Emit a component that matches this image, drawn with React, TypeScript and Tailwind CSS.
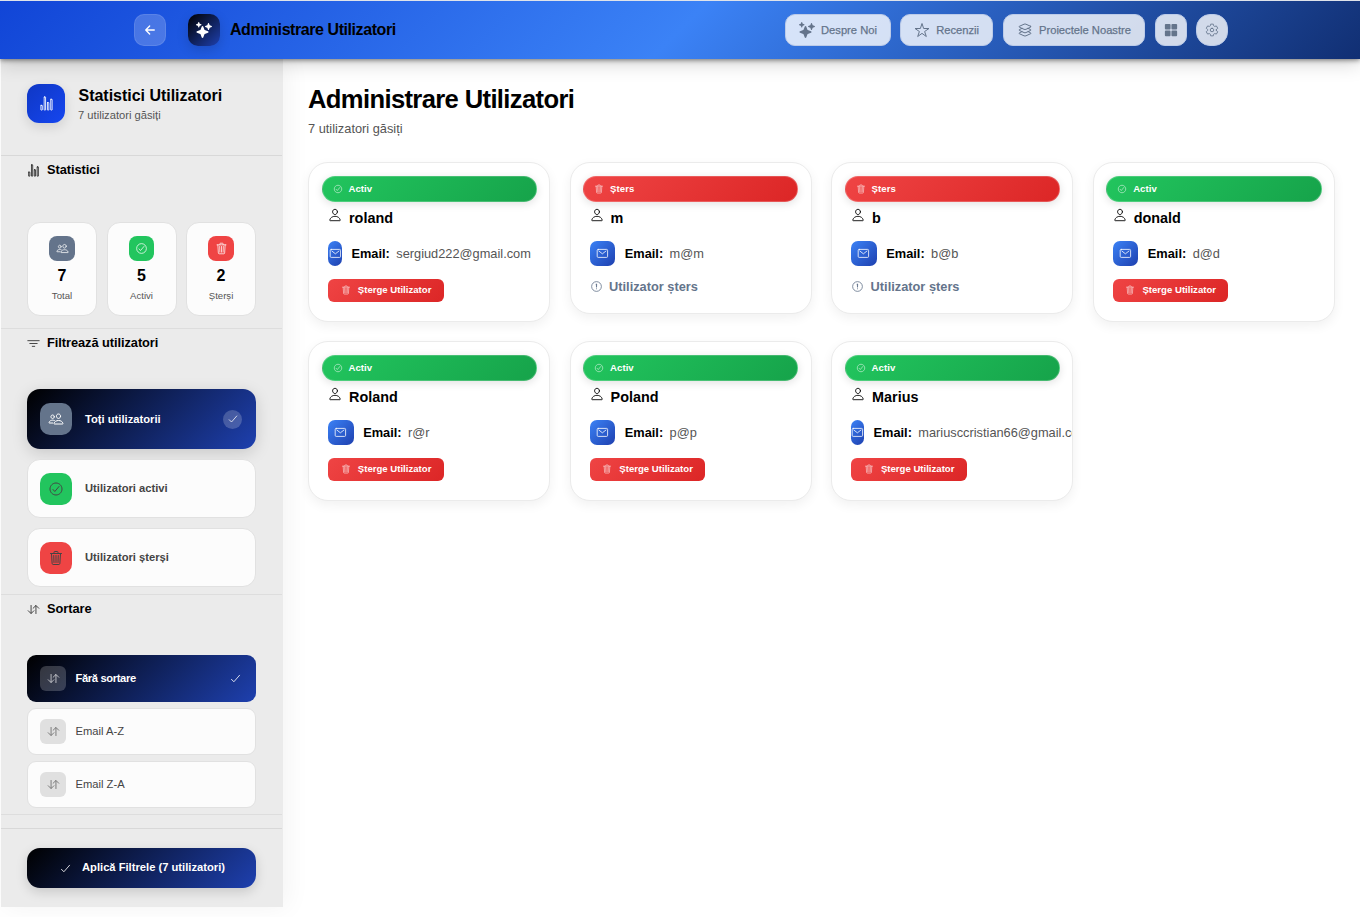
import React from "react";
import {
  IoArrowBack, IoSparkles, IoStarOutline, IoLayersOutline, IoGrid, IoSettingsOutline,
  IoStatsChartOutline, IoPeopleOutline, IoCheckmarkCircleOutline, IoTrashOutline,
  IoFilterOutline, IoSwapVerticalOutline, IoCheckmarkOutline, IoPersonOutline,
  IoMailOutline, IoAlertCircleOutline,
} from "react-icons/io5";

type User = { name: string; email: string; active: boolean };

const users: User[] = [
  { name: "roland", email: "sergiud222@gmail.com", active: true },
  { name: "m", email: "m@m", active: false },
  { name: "b", email: "b@b", active: false },
  { name: "donald", email: "d@d", active: true },
  { name: "Roland", email: "r@r", active: true },
  { name: "Poland", email: "p@p", active: true },
  { name: "Marius", email: "mariusccristian66@gmail.com", active: true },
];

const darkGradient = "bg-[linear-gradient(135deg,#000000_0%,#1e40af_100%)]";

function Header() {
  const button =
    "flex h-8 shrink-0 items-center border border-[#bccbe8] bg-white/80 text-[11.2px] font-medium text-[#64748b]";
  const label = "ml-[6px] whitespace-nowrap [-webkit-text-stroke:0.25px_#64748b]";
  return (
    <header className="relative z-10 flex h-[59px] items-center border-t border-[#dfe3ea] bg-[linear-gradient(135deg,#1145d7_0%,#3b82f6_50%,#112f73_100%)] pl-[134px] shadow-[0_4px_20px_rgba(0,0,0,0.18),0_1px_5px_rgba(0,0,0,0.5)]">
      <button className="flex size-8 items-center justify-center rounded-[10px] border border-white/10 bg-white/20 text-white">
        <IoArrowBack size={14} />
      </button>
      <div className={`ml-[22px] flex size-8 items-center justify-center rounded-[10px] text-white shadow-[0_4px_12px_rgba(0,0,0,0.15)] ${darkGradient}`}>
        <IoSparkles size={16} />
      </div>
      <span className="ml-[10px] w-[555px] text-[16px] font-bold tracking-[-0.43px] text-black">Administrare Utilizatori</span>
      <nav className="flex gap-[9.6px]">
        <button className={`${button} w-[105.6px] rounded-[10px] pl-[13px]`}>
          <IoSparkles size={16} />
          <span className={label}>Despre Noi</span>
        </button>
        <button className={`${button} w-[93.2px] rounded-[10px] pl-[13px]`}>
          <IoStarOutline size={16} />
          <span className={label}>Recenzii</span>
        </button>
        <button className={`${button} w-[142.2px] rounded-[10px] pl-[13px]`}>
          <IoLayersOutline size={16} />
          <span className={label}>Proiectele Noastre</span>
        </button>
        <button className={`${button} w-8 justify-center rounded-[10px]`}>
          <IoGrid size={14} />
        </button>
        <button className={`${button} w-8 justify-center rounded-[14px]`}>
          <IoSettingsOutline size={14} />
        </button>
      </nav>
    </header>
  );
}

function SectionTitle({ icon, children }: { icon: React.ReactNode; children: React.ReactNode }) {
  return (
    <h3 className="flex h-[28px] items-center gap-[7px] pl-[26px] text-[12.8px] font-bold tracking-[-0.05px] text-black">
      <span className="text-[#222222]">{icon}</span>
      {children}
    </h3>
  );
}

function StatCard({ icon, color, value, label }: { icon: React.ReactNode; color: string; value: number; label: string }) {
  return (
    <div className="flex h-[94px] w-[70px] flex-col items-center rounded-[13px] border border-[#e1e1e1] bg-[#fcfcfc] pt-[13px]">
      <div className={`flex h-[25px] w-[25.6px] items-center justify-center rounded-[8px] text-white/90 ${color}`}>{icon}</div>
      <div className="mt-[6px] text-[16px] leading-[18px] font-bold text-black">{value}</div>
      <div className="mt-[5px] text-[9.6px] leading-[12px] text-[#555555]">{label}</div>
    </div>
  );
}

function Sidebar() {
  return (
    <aside className="ml-px h-[848px] w-[282px] shrink-0 bg-[#ebebeb] shadow-[4px_0_24px_rgba(0,0,0,0.05)]">
      <div className="flex h-[97px] w-[281px] border-b border-[#d8d8d8] pt-[25px] pl-[26px]">
        <div className="flex h-[39px] w-[38px] items-center justify-center rounded-[12px] bg-[linear-gradient(135deg,#0f37c4,#1546f0)] text-white/90 shadow-[0_4px_12px_rgba(0,0,0,0.12)]">
          <IoStatsChartOutline size={15} />
        </div>
        <div className="ml-[13px] pt-[2px]">
          <h2 className="pl-[0.5px] text-[16px] leading-[19px] font-bold tracking-[-0.02px] text-black">Statistici Utilizatori</h2>
          <p className="mt-[3px] text-[11.2px] leading-[15px] text-[#555555]">7 utilizatori găsiți</p>
        </div>
      </div>

      <section className="h-[173px] w-[281px] border-b border-[#dddddd]">
        <SectionTitle icon={<IoStatsChartOutline size={13} />}>Statistici</SectionTitle>
        <div className="mt-[38px] flex gap-[9.5px] pl-[26px]">
          <StatCard icon={<IoPeopleOutline size={13} />} color="bg-[#64748b]" value={7} label="Total" />
          <StatCard icon={<IoCheckmarkCircleOutline size={13} />} color="bg-[#22c55e]" value={5} label="Activi" />
          <StatCard icon={<IoTrashOutline size={13} />} color="bg-[#ef4444]" value={2} label="Șterși" />
        </div>
      </section>

      <section className="h-[266px] w-[281px] border-b border-[#dddddd]">
        <SectionTitle icon={<IoFilterOutline size={13} />}>Filtrează utilizatori</SectionTitle>
        <div className="mt-[32px] flex flex-col pl-[26px] text-[11.2px] font-bold">
          <button className={`flex h-[60px] w-[229px] items-center rounded-[13px] pl-[13px] text-white shadow-[0_4px_16px_rgba(0,0,0,0.15)] ${darkGradient}`}>
            <span className="flex size-8 items-center justify-center rounded-[10px] bg-[#64748b]"><IoPeopleOutline size={16} /></span>
            <span className="ml-[13px]">Toți utilizatorii</span>
            <span className="mr-[14px] ml-auto flex size-[19px] items-center justify-center rounded-full bg-white/20"><IoCheckmarkOutline size={12} /></span>
          </button>
          <button className="mt-[10px] flex h-[59px] w-[229px] items-center rounded-[13px] border border-[#e1e1e1] bg-[#fcfcfc] pl-[12px] text-[#444444]">
            <span className="flex size-8 items-center justify-center rounded-[10px] bg-[#22c55e]"><IoCheckmarkCircleOutline size={16} /></span>
            <span className="ml-[13px]">Utilizatori activi</span>
          </button>
          <button className="mt-[10px] flex h-[59px] w-[229px] items-center rounded-[13px] border border-[#e1e1e1] bg-[#fcfcfc] pl-[12px] text-[#444444]">
            <span className="flex size-8 items-center justify-center rounded-[10px] bg-[#ef4444]"><IoTrashOutline size={16} /></span>
            <span className="ml-[13px]">Utilizatori șterși</span>
          </button>
        </div>
      </section>

      <section className="h-[220px] w-[281px] border-b border-[#dddddd]">
        <SectionTitle icon={<IoSwapVerticalOutline size={13} />}>Sortare</SectionTitle>
        <div className="mt-[32px] flex flex-col gap-[6px] pl-[26px] text-[11.2px] text-[#444444]">
          <button className={`flex h-[47px] w-[229px] items-center rounded-[9px] pl-[13px] font-bold text-white ${darkGradient}`}>
            <span className="flex h-[25px] w-[26px] items-center justify-center rounded-[6px] bg-white/20 text-white/80"><IoSwapVerticalOutline size={13} /></span>
            <span className="ml-[9.5px] tracking-[-0.37px]">Fără sortare</span>
            <IoCheckmarkOutline size={13} className="mr-[14px] ml-auto" />
          </button>
          {["Email A-Z", "Email Z-A"].map((label) => (
            <button key={label} className="flex h-[47px] w-[229px] items-center rounded-[9px] border border-[#e1e1e1] bg-[#fcfcfc] pl-[12px]">
              <span className="flex h-[25px] w-[26px] items-center justify-center rounded-[6px] bg-[#e0e0e0] text-[#666666]"><IoSwapVerticalOutline size={13} /></span>
              <span className="ml-[9.5px]">{label}</span>
            </button>
          ))}
        </div>
      </section>

      <div className="mt-[13px] w-[281px] border-t border-[#d8d8d8] pt-[19px] pl-[26px]">
        <button className={`flex h-10 w-[229px] items-center rounded-[13px] pl-[32px] text-[11.2px] font-bold text-white shadow-[0_4px_12px_rgba(0,0,0,0.15)] ${darkGradient}`}>
          <IoCheckmarkOutline size={13} />
          <span className="ml-[10px] pb-[2px]">Aplică Filtrele (7 utilizatori)</span>
        </button>
      </div>
    </aside>
  );
}

function UserCard({ user }: { user: User }) {
  const badge = user.active
    ? "bg-[linear-gradient(135deg,#22c55e,#16a34a)]"
    : "bg-[linear-gradient(135deg,#ef4444,#dc2626)]";
  return (
    <article className={`min-w-0 overflow-hidden rounded-[20px] border border-[#ebebeb] bg-white px-[12.5px] pt-[13px] shadow-[0_4px_12px_rgba(0,0,0,0.06)] ${user.active ? "h-[160px]" : "h-[152px]"}`}>
      <div className={`flex h-[25.6px] items-center rounded-full border border-white/20 pl-[10px] text-[9.6px] font-bold text-white shadow-[0_2px_8px_rgba(0,0,0,0.12)] ${badge}`}>
        {user.active ? <IoCheckmarkCircleOutline size={10} className="opacity-80" /> : <IoTrashOutline size={10} className="opacity-80" />}
        <span className="ml-[6px] tracking-[0.05px]">{user.active ? "Activ" : "Șters"}</span>
      </div>
      <div className="mt-[6.4px] flex h-5 pl-[6.5px] text-black">
        <IoPersonOutline size={14} />
        <span className="ml-[7px] text-[14.4px] leading-[20px] font-bold">{user.name}</span>
      </div>
      <div className="mt-[13px] flex h-[25px] items-center pr-[6px] pl-[6.5px] text-[12.8px] text-[#555555]">
        <span className="flex h-[25px] w-[25.6px] min-w-[12.8px] items-center justify-center rounded-[7px] bg-[linear-gradient(135deg,#3b82f6,#1e40af)] text-white">
          <IoMailOutline size={12.8} className="shrink-0" />
        </span>
        <span className="ml-[9.6px] shrink-0 font-bold text-black">Email:</span>
        <span className="ml-[6.4px] shrink-0 whitespace-nowrap">{user.email}</span>
      </div>
      {user.active ? (
        <button className="mt-[13px] ml-[6.5px] flex h-[23px] w-[115.5px] items-center rounded-[6px] bg-[linear-gradient(135deg,#ef4444,#dc2626)] pl-[12.8px] text-[9.6px] font-bold whitespace-nowrap text-white">
          <IoTrashOutline size={10} className="opacity-80" />
          <span className="ml-[7px]">Șterge Utilizator</span>
        </button>
      ) : (
        <div className="mt-[12px] ml-[6.5px] flex h-[18px] items-center text-[12.8px] font-bold text-[#64748b]">
          <IoAlertCircleOutline size={13} />
          <span className="ml-[6.5px]">Utilizator șters</span>
        </div>
      )}
    </article>
  );
}

export default function App() {
  return (
    <div className="h-[917px] w-[1360px] overflow-hidden bg-white font-['Liberation_Sans',Arial,sans-serif]">
      <Header />
      <div className="flex">
        <Sidebar />
        <main className="w-[1077px] pt-[25px] pr-[25px] pl-[25px]">
          <h1 className="text-[25.6px] leading-[30px] font-bold tracking-[-0.64px] text-black">Administrare Utilizatori</h1>
          <p className="mt-[6px] text-[12.8px] leading-[18px] text-[#555555]">7 utilizatori găsiți</p>
          <div className="mt-[24px] grid grid-cols-4 items-start gap-x-[19.2px] gap-y-[19px]">
            {users.map((user) => (
              <UserCard key={user.name} user={user} />
            ))}
          </div>
        </main>
      </div>
    </div>
  );
}
